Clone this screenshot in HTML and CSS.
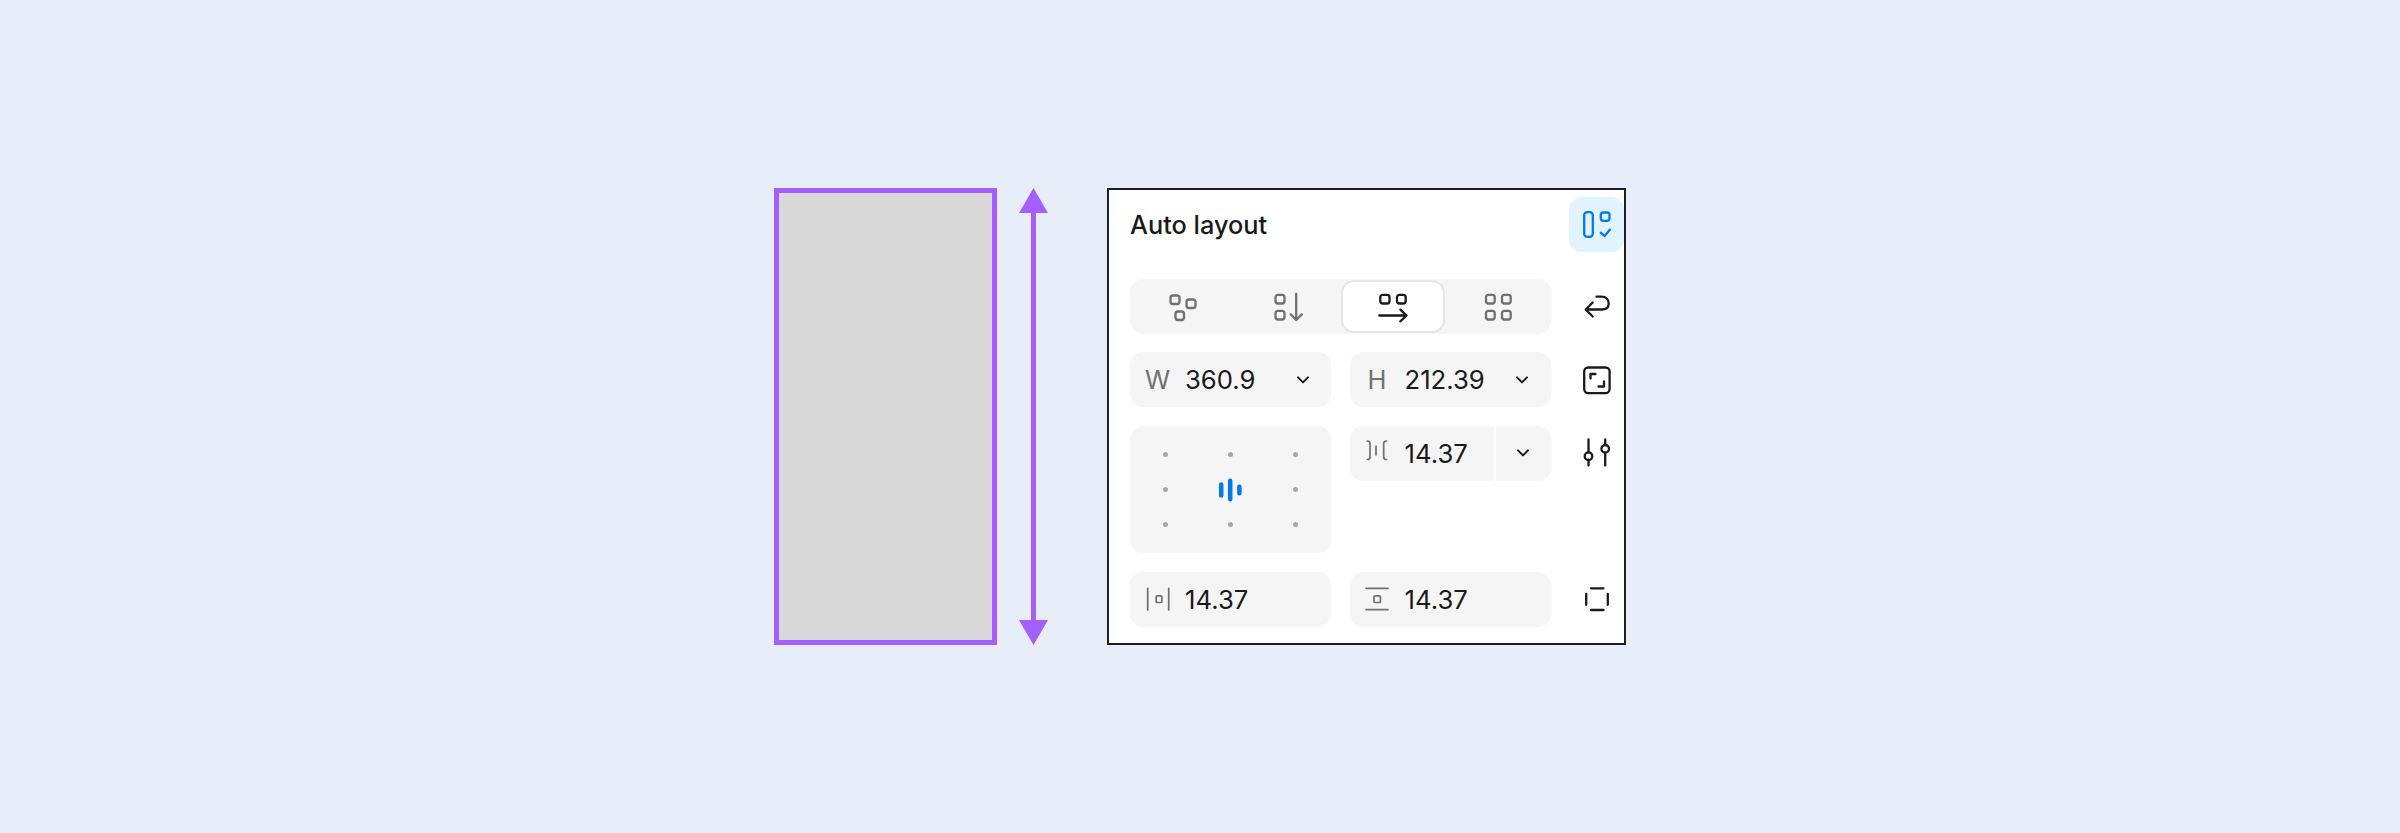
FILE: index.html
```html
<!DOCTYPE html>
<html lang="en">
<head>
  <meta charset="UTF-8" />
  <title>Auto layout</title>
  <link rel="stylesheet" href="styles.css">
</head>
<body>

  <div class="scene">
    <div class="hug-box"></div>

    <svg class="height-arrow" width="29" height="457" viewBox="0 0 29 457">
      <path class="arrow-fill" d="M14.5 0 L29 25 H17 V432 H29 L14.5 457 L0 432 H12 V25 H0 Z"/>
    </svg>

    <section class="panel">
      <div class="panel-head">
        <div class="panel-title">Auto layout</div>
        <div class="side-btn active">
          <svg class="icon" viewBox="0 0 32 32">
            <rect x="3.2" y="3.2" width="8.6" height="24.6" rx="3"/>
            <rect x="19.8" y="3.5" width="8.7" height="8.3" rx="2.5"/>
            <path d="M19.8 23.6 L23.6 27 L29 20.6"/>
          </svg>
        </div>
      </div>

      <div class="panel-grid">
        <div class="segmented">
          <div class="segment">
            <svg class="icon" viewBox="0 0 32 32">
              <rect x="3.5" y="4.5" width="9" height="8.5" rx="2.5"/>
              <rect x="19.5" y="8.5" width="9" height="8.5" rx="2.5"/>
              <rect x="8.5" y="20.5" width="8.5" height="8.5" rx="2.5"/>
            </svg>
          </div>
          <div class="segment">
            <svg class="icon" viewBox="0 0 32 32">
              <rect x="3.5" y="3.8" width="9" height="8.7" rx="2.5"/>
              <rect x="3.5" y="19.8" width="9" height="8.7" rx="2.5"/>
              <path d="M24.2 3 V29 M18.8 23.4 L24.2 29 L29.8 23.4"/>
            </svg>
          </div>
          <div class="segment selected">
            <svg class="icon" viewBox="0 0 32 32">
              <rect x="3.3" y="3.8" width="9.2" height="8.7" rx="2.5"/>
              <rect x="20" y="3.8" width="8.7" height="8.7" rx="2.5"/>
              <path d="M2.3 24.5 H29.5 M23.4 18.6 L29.5 24.5 L23.4 30.4"/>
            </svg>
          </div>
          <div class="segment">
            <svg class="icon" viewBox="0 0 32 32">
              <rect x="4" y="3.8" width="8.7" height="8.7" rx="2.5"/>
              <rect x="20" y="3.8" width="8.7" height="8.7" rx="2.5"/>
              <rect x="4" y="19.8" width="8.7" height="8.7" rx="2.5"/>
              <rect x="20" y="19.8" width="8.7" height="8.7" rx="2.5"/>
            </svg>
          </div>
        </div>
        <div class="side-btn">
          <svg class="icon dark" viewBox="0 0 32 32">
            <path d="M11.7 11.5 L4.7 18.5 L11.7 25.5 M4.7 18.5 H20.5 C25 18.5 27.7 16.5 27.7 12.5 C27.7 8.5 25 5.7 20.5 5.7 H15.5"/>
          </svg>
        </div>

        <div class="field">
          <span class="field-label">W</span>
          <span class="field-value">360.9</span>
          <span class="field-caret">
            <svg class="caret" viewBox="0 0 14 10"><path d="M2 2.4 L7 7.4 L12 2.4"/></svg>
          </span>
        </div>
        <div class="field">
          <span class="field-label">H</span>
          <span class="field-value">212.39</span>
          <span class="field-caret">
            <svg class="caret" viewBox="0 0 14 10"><path d="M2 2.4 L7 7.4 L12 2.4"/></svg>
          </span>
        </div>
        <div class="side-btn">
          <svg class="icon dark" viewBox="0 0 32 32">
            <rect x="3.2" y="3.5" width="25.4" height="25.6" rx="4"/>
            <path d="M9.5 14.5 V10 H14.5 M23 17.5 V22.5 H17.5"/>
          </svg>
        </div>

        <div class="align-box">
          <span class="dot"></span><span class="dot"></span><span class="dot"></span>
          <span class="dot"></span>
          <svg class="icon bars" viewBox="0 0 32 32">
            <path d="M7.2 10.4 V21.6 M16.2 6.7 V25.3 M25.4 12.7 V19.3"/>
          </svg>
          <span class="dot"></span>
          <span class="dot"></span><span class="dot"></span><span class="dot"></span>
        </div>
        <div class="field split">
          <span class="field-label">
            <svg class="icon thin gap-icon" viewBox="0 0 32 32">
              <path d="M6.2 5 C8 5 9 6 9 7.5 V21 C9 22.5 8 23.5 6.2 23.5 M15 10 V19 M25.6 5 C23.7 5 22.7 6 22.7 7.5 V21 C22.7 22.5 23.7 23.5 25.6 23.5"/>
            </svg>
          </span>
          <span class="field-value">14.37</span>
          <span class="field-caret">
            <svg class="caret" viewBox="0 0 14 10"><path d="M2 2.4 L7 7.4 L12 2.4"/></svg>
          </span>
        </div>
        <div class="side-btn top">
          <svg class="icon dark" viewBox="0 0 32 32">
            <path d="M7.5 2.5 V15.4 M7.5 23 V28.5 M24.2 2.5 V8 M24.2 15.6 V28.5"/>
            <circle cx="7.5" cy="19.2" r="3.8"/>
            <circle cx="24.2" cy="11.8" r="3.8"/>
          </svg>
        </div>

        <div class="field">
          <span class="field-label">
            <svg class="icon thin" viewBox="0 0 32 32">
              <path d="M5.7 5.3 V27 M26.7 5.3 V27"/>
              <rect x="14.1" y="12.8" width="5.8" height="6.7" rx="1"/>
            </svg>
          </span>
          <span class="field-value">14.37</span>
        </div>
        <div class="field">
          <span class="field-label">
            <svg class="icon thin" viewBox="0 0 32 32">
              <path d="M5 5.3 H27 M5 26.7 H27"/>
              <rect x="13" y="12.8" width="6.4" height="6.7" rx="1"/>
            </svg>
          </span>
          <span class="field-value">14.37</span>
        </div>
        <div class="side-btn">
          <svg class="icon dark" viewBox="0 0 32 32">
            <path d="M10 5.3 H22.5 M10 27 H22.5 M5.2 10.8 V21.8 M26.8 10.8 V21.8"/>
          </svg>
        </div>
      </div>
    </section>
  </div>

</body>
</html>
```

FILE: styles.css
```css
* {
  margin: 0;
  padding: 0;
  box-sizing: border-box;
}

body {
  background-color: #E7EDF9;
  font-family: Inter, "Liberation Sans", sans-serif;
  color: #1A1A1A;
  height: 100vh;
  overflow: hidden;
  display: flex;
  align-items: center;
  justify-content: center;
}

.scene {
  display: flex;
  align-items: center;
}

.hug-box {
  width: 223px;
  height: 457px;
  background-color: #D9D9D9;
  border: 5px solid #A55FFF;
}

.height-arrow {
  display: block;
  margin-left: 21.5px;
  margin-right: 59.5px;
}

.arrow-fill {
  fill: #A55FFF;
}

.panel {
  width: 519px;
  height: 457px;
  background-color: #FFFFFF;
  border: 2px solid #1F1F1F;
  padding: 7px 0 0 21px;
}

.panel-head {
  width: 494px;
  height: 55px;
  margin-bottom: 27px;
  display: flex;
  align-items: center;
  justify-content: space-between;
}

.panel-title {
  font-size: 25.3px;
  font-weight: 550;
}

.panel-grid {
  display: grid;
  grid-template-columns: 201px 201px 55px;
  grid-template-rows: 55px 55px 127.5px 55px;
  gap: 18.4px 18.5px;
}

.side-btn {
  display: flex;
  align-items: center;
  justify-content: center;
  width: 55px;
  height: 55px;
  border-radius: 13px;
}

.side-btn.active {
  background-color: #E0F3FF;
}

.side-btn.active .icon {
  stroke: #007BE5;
}

.segmented {
  grid-column: span 2;
  background-color: #F5F5F5;
  border-radius: 13px;
  display: grid;
  grid-template-columns: repeat(4, 1fr);
}

.segment {
  display: flex;
  align-items: center;
  justify-content: center;
}

.segment.selected {
  background-color: #FFFFFF;
  border: 2px solid #E6E6E6;
  border-radius: 13px;
  margin: 1px 0 1px 1px;
}

.segment.selected .icon {
  stroke: #1A1A1A;
}

.icon {
  display: block;
  width: 32px;
  height: 32px;
  fill: none;
  stroke: #707070;
  stroke-width: 2.3;
  stroke-linecap: round;
  stroke-linejoin: round;
}

.icon.dark {
  stroke: #1A1A1A;
}

.icon.thin {
  stroke-width: 1.7;
}

.gap-icon {
  margin-top: -3px;
}

.icon.bars {
  stroke: #007BE5;
  stroke-width: 4.5;
}

.field {
  height: 55px;
  background-color: #F5F5F5;
  border-radius: 13px;
  display: flex;
  align-items: center;
}

.field-label {
  flex: 0 0 55px;
  display: flex;
  align-items: center;
  justify-content: center;
  font-size: 25.5px;
  color: #707070;
}

.field-value {
  flex: 1;
  font-size: 25.7px;
}

.field-caret {
  flex: 0 0 57px;
  align-self: stretch;
  display: flex;
  align-items: center;
  justify-content: center;
}

.field.split {
  align-self: start;
}

.field.split .field-caret {
  border-left: 2.5px solid #FFFFFF;
}

.caret {
  display: block;
  width: 14px;
  height: 10px;
  fill: none;
  stroke: #1A1A1A;
  stroke-width: 2;
  stroke-linecap: round;
  stroke-linejoin: round;
}

.side-btn.top {
  align-self: start;
}

.align-box {
  background-color: #F5F5F5;
  border-radius: 13px;
  display: grid;
  grid-template-columns: repeat(3, 65.3px);
  grid-template-rows: repeat(3, 35.3px);
  justify-content: center;
  align-content: center;
  justify-items: center;
  align-items: center;
}

.dot {
  width: 5px;
  height: 5px;
  border-radius: 50%;
  background-color: #A8A8A8;
}
```
